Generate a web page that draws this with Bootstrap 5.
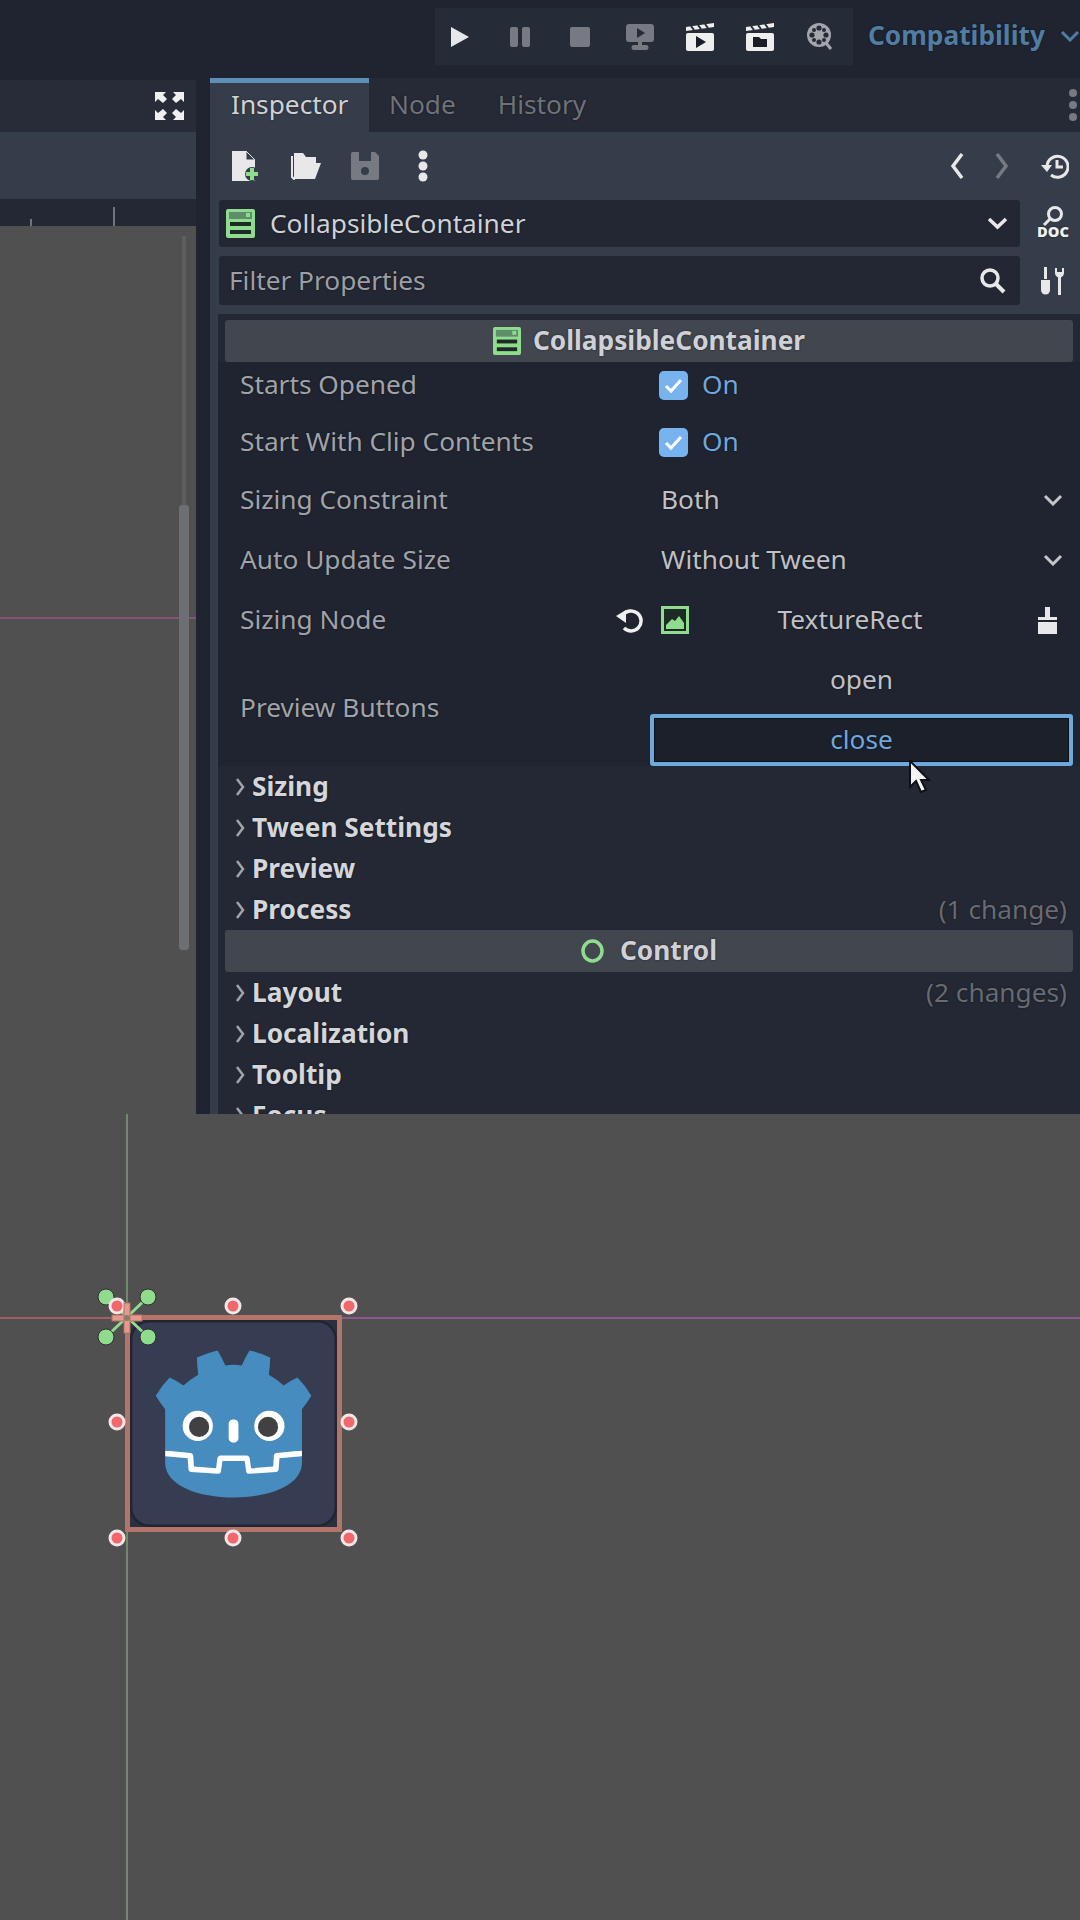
<!DOCTYPE html>
<html lang="en">
<head>
  <meta charset="UTF-8" />
  <title>Godot Inspector</title>
  <link href="https://cdn.jsdelivr.net/npm/bootstrap@5.3.0/dist/css/bootstrap.min.css" rel="stylesheet">
  <style>
    html, body { margin: 0; background: #1f2430; }
    body { font-family: "Noto Sans", sans-serif; font-size: 26.25px; line-height: 1.2; color: #d0d2d7; text-shadow: 0 0 2px rgba(0,0,0,.6); }
    svg { display: block; flex: none; }
    .app-page { width: 1080px; height: 1920px; overflow: hidden; position: relative; }

    .top-bar { height: 78px; background: #1f2430; }
    .run-group { margin-left: 435px; margin-top: 8px; width: 418px; height: 57px; background: #262b38; }
    .run-slot { width: 60px; height: 57px; }
    .run-group .run-slot:first-child { margin-left: -5px; }
    .compat { color: #527da3; font-weight: 700; margin-left: 15px; margin-top: 17px; height: 38px; }
    .compat svg { margin-left: 15px; }

    .main-row { height: 1036px; }
    .left-col { width: 196px; }
    .left-head { height: 52px; margin-top: 2px; background: #272c38; padding-right: 12px; }
    .left-tools { height: 67px; background: #363d4a; }
    .left-ruler { height: 27px; background: #232834; position: relative; }
    .tick { position: absolute; bottom: 0; width: 2px; background: #71747a; }
    .tick-a { left: 30px; height: 7px; }
    .tick-b { left: 113px; height: 19px; }
    .left-view { flex: 1; background: #505050; position: relative; overflow: hidden; }
    .left-axis { position: absolute; left: 0; right: 0; top: 391px; height: 2px; background: #85527a; }
    .left-scroll { position: absolute; left: 179px; top: 279px; width: 10px; height: 445px; background: #6d7073; border-radius: 3px; }
    .left-track { position: absolute; left: 182px; top: 10px; width: 4px; height: 269px; background: #5b5d60; }
    .gutter { width: 14px; background: #1f2430; }

    .right-col { flex: 1; min-width: 0; background: #363d4a; }
    .tab-row { height: 54px; background: #252a36; position: relative; }
    .tab-on { width: 159px; background: #363d4a; border-top: 5px solid #5e8fb8; color: #d0d2d7; padding-left: 21px; padding-top: 6px; }
    .tab-off { color: #6f727a; padding-top: 11px; }
    .tab-node { margin-left: 20px; }
    .tab-hist { margin-left: 42px; }
    .dot-col { position: absolute; right: 2px; top: 10px; }

    .tool-row { height: 68px; padding-left: 21px; padding-right: 11px; }
    .tool-a { width: 60px; }
    .tool-more { margin-left: 7px; }
    .tool-gap { margin-left: auto; }
    .nav-back { margin-right: 31px; }
    .nav-next { margin-right: 32px; }

    .field-row { height: 47px; margin-left: 9px; }
    .filter-row { height: 49px; margin-top: 9px; }
    .field-box { width: 801px; height: 100%; background: #222733; border-radius: 3px; }
    .node-box { padding-left: 7px; padding-right: 12px; }
    .node-icon { margin-right: 15px; }
    .filter-box { padding-left: 10px; padding-right: 14px; color: #9c9fa6; }
    .field-side { width: 60px; padding-left: 17px; }
    .doc-label { font-family: "Noto Sans", sans-serif; font-weight: 900; font-size: 14px; fill: #f0f0f0; }

    .prop-panel { flex: 1; min-height: 0; margin-top: 9px; margin-left: 8px; background: #232834; padding-top: 6px; overflow: hidden; }
    .sect-head { height: 42px; margin: 0 7px; background: #41464f; border-radius: 3px; font-weight: 700; color: #cfd1d6; }
    .sect-icon { margin-right: 12px; }
    .prop-row { padding-left: 22px; color: #a0a3a9; }
    .h-starts { height: 46px; margin-bottom: 6px; }
    .h-clip { height: 56px; }
    .h-std { height: 60px; }
    .prop-dark { background: #1f2430; }
    .prop-label { width: 410px; padding-right: 7px; }
    .prop-value { width: 423px; padding-left: 7px; padding-right: 7px; color: #bfc1c6; }
    .check-value { padding-left: 9px; }
    .text-value { padding-left: 11px; padding-right: 10px; }
    .on-text { color: #6fa8dc; margin-left: 14px; }
    .node-name { flex: 1; text-align: center; margin-right: 26px; }
    .h-btns { height: 116px; }
    .btn-stack { width: 423px; }
    .open-btn { height: 63px; padding-bottom: 4px; color: #bfc1c6; }
    .close-btn { height: 52px; width: 423px; border: 4px solid #6fa8dc; border-radius: 3px; background: #1c202b; color: #6fa8dc; box-shadow: inset 0 0 0 1px #0d1017; }

    .group-row { height: 41px; padding-left: 18px; padding-right: 13px; font-weight: 700; color: #d4d6da; }
    .group-row svg { margin-right: 7px; }
    .change-note { margin-left: auto; font-weight: 400; color: #686b73; }

    .mouse-arrow { position: absolute; left: 908px; top: 759px; }

    .bottom-view { flex: 1; background: #505050; position: relative; overflow: hidden; }
    .axis-green { position: absolute; left: 126px; top: 0; bottom: 0; width: 2px; background: #6f8a6a; }
    .axis-red { position: absolute; left: 0; width: 127px; top: 203px; height: 2px; background: #9c6060; }
    .axis-purple { position: absolute; left: 127px; right: 0; top: 203px; height: 2px; background: #8a5a8c; }
    .gizmo { position: absolute; left: 90px; top: 169px; }
  </style>
</head>
<body>
  <div class="app-page d-flex flex-column">

    <div class="top-bar d-flex">
      <div class="run-group d-flex align-items-center">
        <div class="run-slot d-flex align-items-center justify-content-center">
          <svg width="20" height="22" viewBox="0 0 20 22"><path d="M1 1 19 11 1 21Z" fill="#e6e7ea"/></svg>
        </div>
        <div class="run-slot d-flex align-items-center justify-content-center">
          <svg width="20" height="20" viewBox="0 0 20 20"><rect x="0" y="0" width="8" height="20" rx="2" fill="#777a82"/><rect x="12" y="0" width="8" height="20" rx="2" fill="#777a82"/></svg>
        </div>
        <div class="run-slot d-flex align-items-center justify-content-center">
          <svg width="20" height="20" viewBox="0 0 20 20"><rect width="20" height="20" rx="2" fill="#777a82"/></svg>
        </div>
        <div class="run-slot d-flex align-items-center justify-content-center">
          <svg width="28" height="26" viewBox="0 0 28 26"><path d="M3 0H25a3 3 0 0 1 3 3V15a3 3 0 0 1-3 3H16v3h4a2.500 2.500 0 0 1 0 5H8a2.500 2.500 0 0 1 0-5h4v-3H3a3 3 0 0 1-3-3V3a3 3 0 0 1 3-3Z" fill="#777a82"/><path d="M11 4 19 9 11 14Z" fill="#262b38"/></svg>
        </div>
        <div class="run-slot d-flex align-items-center justify-content-center">
          <svg width="30" height="28" viewBox="0 0 30 28"><path d="M1 4 29 0V4L1 8Z" fill="#eee"/><rect x="1" y="10" width="28" height="18" rx="2" fill="#eee"/><path d="M11 13 21 19 11 25Z" fill="#1a1d26"/><path d="M6 3 9 7M13 2 16 6M20 1 23 5" stroke="#262b38" stroke-width="2"/></svg>
        </div>
        <div class="run-slot d-flex align-items-center justify-content-center">
          <svg width="30" height="28" viewBox="0 0 30 28"><path d="M1 4 29 0V4L1 8Z" fill="#eee"/><rect x="1" y="10" width="28" height="18" rx="2" fill="#eee"/><path d="M8 14H14L16 16H22V24H8Z" fill="#1a1d26"/><path d="M6 3 9 7M13 2 16 6M20 1 23 5" stroke="#262b38" stroke-width="2"/></svg>
        </div>
        <div class="run-slot d-flex align-items-center justify-content-center">
          <svg width="27" height="29" viewBox="0 0 27 29"><circle cx="12" cy="13" r="12" fill="#a4a6ab"/><g fill="#262b38"><circle cx="12" cy="6" r="2.600"/><circle cx="12" cy="20" r="2.600"/><circle cx="5" cy="13" r="2.600"/><circle cx="19" cy="13" r="2.600"/><circle cx="7" cy="8" r="2"/><circle cx="17" cy="8" r="2"/><circle cx="7" cy="18" r="2"/><circle cx="17" cy="18" r="2"/></g><path d="M19 21 24 27" stroke="#a4a6ab" stroke-width="3" fill="none"/></svg>
        </div>
      </div>
      <div class="compat d-flex align-items-center">Compatibility
        <svg width="20" height="12" viewBox="0 0 20 12"><path d="M2 2 10 10 18 2" fill="none" stroke="#527da3" stroke-width="3"/></svg>
      </div>
    </div>

    <div class="main-row d-flex">
      <div class="left-col d-flex flex-column">
        <div class="left-head d-flex align-items-center justify-content-end">
          <svg width="29" height="28" viewBox="0 0 29 28" fill="#f0f0f0"><path d="M0 0H11L8 3 12 7 8 11 3 7 0 10Z"/><path d="M29 0H18L21 3 17 7 21 11 26 7 29 10Z"/><path d="M0 28H11L8 25 12 21 8 17 3 21 0 18Z"/><path d="M29 28H18L21 25 17 21 21 17 26 21 29 18Z"/></svg>
        </div>
        <div class="left-tools"></div>
        <div class="left-ruler"><span class="tick tick-a"></span><span class="tick tick-b"></span></div>
        <div class="left-view">
          <div class="left-axis"></div>
          <div class="left-track"></div>
          <div class="left-scroll"></div>
        </div>
      </div>
      <div class="gutter"></div>

      <div class="right-col d-flex flex-column">
        <div class="tab-row d-flex">
          <div class="tab-on">Inspector</div>
          <div class="tab-off tab-node">Node</div>
          <div class="tab-off tab-hist">History</div>
          <div class="dot-col">
            <svg width="10" height="34" viewBox="0 0 10 34" fill="#777a82"><circle cx="5" cy="5" r="4"/><circle cx="5" cy="17" r="4"/><circle cx="5" cy="29" r="4"/></svg>
          </div>
        </div>

        <div class="tool-row d-flex align-items-center">
          <div class="tool-a">
            <svg width="28" height="30" viewBox="0 0 28 30"><path d="M1 0H15L24 9V30H1Z" fill="#e8e8ea"/><path d="M15 0V9H24Z" fill="#363d4a" stroke="#e8e8ea"/><circle cx="21" cy="23" r="7" fill="#363d4a"/><path d="M19 17H23V21H27V25H23V29H19V25H15V21H19Z" fill="#8fdc8f"/></svg>
          </div>
          <div class="tool-a">
            <svg width="30" height="28" viewBox="0 0 30 28"><path d="M3 1H12L15 5H25V10H10L3 27Z" fill="#e8e8ea"/><path d="M1 4V25L3 27 9 11H25" fill="none" stroke="#e8e8ea" stroke-width="2"/><path d="M9 11H30L24 27H3Z" fill="#e8e8ea"/></svg>
          </div>
          <div class="tool-a">
            <svg width="28" height="28" viewBox="0 0 28 28"><path d="M2 0H24L28 4V26a2 2 0 0 1-2 2H2a2 2 0 0 1-2-2V2a2 2 0 0 1 2-2Z" fill="#777a82"/><rect x="8" y="0" width="12" height="9" fill="#363d4a"/><circle cx="14" cy="19" r="4" fill="#363d4a"/></svg>
          </div>
          <div class="tool-more">
            <svg width="10" height="32" viewBox="0 0 10 32" fill="#e8e8ea"><circle cx="5" cy="5" r="4.500"/><circle cx="5" cy="16" r="4.500"/><circle cx="5" cy="27" r="4.500"/></svg>
          </div>
          <div class="tool-gap nav-back">
            <svg width="14" height="28" viewBox="0 0 14 28"><path d="M12 2 3 14 12 26" fill="none" stroke="#e8e8ea" stroke-width="3.500"/></svg>
          </div>
          <div class="nav-next">
            <svg width="14" height="28" viewBox="0 0 14 28"><path d="M2 2 11 14 2 26" fill="none" stroke="#777a82" stroke-width="3.500"/></svg>
          </div>
          <div>
            <svg width="28" height="26" viewBox="0 0 28 26"><path d="M6 13a10.500 10.500 0 1 1 4 9" fill="none" stroke="#e8e8ea" stroke-width="3"/><path d="M0 12H11L6 19Z" fill="#e8e8ea"/><path d="M16 7V14H22" fill="none" stroke="#e8e8ea" stroke-width="3"/></svg>
          </div>
        </div>

        <div class="field-row d-flex">
          <div class="field-box node-box d-flex align-items-center">
            <svg class="node-icon" width="29" height="29" viewBox="0 0 29 29"><rect width="29" height="29" rx="2" fill="#8fdc8f"/><rect x="3" y="3" width="23" height="7" fill="#5f8f6a"/><rect x="20" y="4" width="4" height="4" fill="#8fdc8f"/><rect x="4" y="13" width="21" height="4" fill="#1e2a24"/><rect x="4" y="21" width="21" height="4" fill="#1e2a24"/></svg>
            <span>CollapsibleContainer</span>
            <svg class="ms-auto" width="21" height="13" viewBox="0 0 21 13"><path d="M2 2 10.500 10 19 2" fill="none" stroke="#e8e8ea" stroke-width="3.500"/></svg>
          </div>
          <div class="field-side d-flex align-items-center">
            <svg width="32" height="36" viewBox="0 0 32 36"><circle cx="18" cy="8" r="6.500" fill="none" stroke="#e8e8ea" stroke-width="3"/><path d="M13 13 7 19" stroke="#e8e8ea" stroke-width="3"/><text class="doc-label" x="0" y="31" textLength="32" lengthAdjust="spacingAndGlyphs">DOC</text></svg>
          </div>
        </div>

        <div class="field-row filter-row d-flex">
          <div class="field-box filter-box d-flex align-items-center">
            <span>Filter Properties</span>
            <svg class="ms-auto" width="26" height="26" viewBox="0 0 26 26"><circle cx="10" cy="10" r="8" fill="none" stroke="#e8e8ea" stroke-width="3.500"/><path d="M16 16 24 24" stroke="#e8e8ea" stroke-width="4"/></svg>
          </div>
          <div class="field-side d-flex align-items-center ps-3">
            <svg class="ms-1" width="26" height="28" viewBox="0 0 26 28"><rect x="4" y="0" width="3" height="12" fill="#e8e8ea"/><path d="M1 13H10V23a4.500 4.500 0 0 1-9 0Z" fill="#e8e8ea"/><path d="M15 1V6a4.500 4.500 0 0 0 9 0V1h-2V5H17V1Z" fill="#e8e8ea"/><rect x="18" y="9" width="3" height="19" fill="#e8e8ea"/></svg>
          </div>
        </div>

        <div class="prop-panel">
          <div class="sect-head d-flex align-items-center justify-content-center">
            <svg class="sect-icon" width="28" height="28" viewBox="0 0 29 29"><rect width="29" height="29" rx="2" fill="#8fdc8f"/><rect x="3" y="3" width="23" height="7" fill="#5f8f6a"/><rect x="20" y="4" width="4" height="4" fill="#8fdc8f"/><rect x="4" y="13" width="21" height="4" fill="#1e2a24"/><rect x="4" y="21" width="21" height="4" fill="#1e2a24"/></svg>
            <span>CollapsibleContainer</span>
          </div>

          <div class="prop-dark">
            <div class="prop-row h-starts d-flex align-items-center">
              <div class="prop-label">Starts Opened</div>
              <div class="prop-value check-value d-flex align-items-center">
                <svg width="29" height="29" viewBox="0 0 29 29"><rect width="29" height="29" rx="5" fill="#77b3ee"/><path d="M7 15 12 20 22 9" fill="none" stroke="#fff" stroke-width="3"/></svg>
                <span class="on-text">On</span>
              </div>
            </div>
            <div class="prop-row h-clip d-flex align-items-center">
              <div class="prop-label">Start With Clip Contents</div>
              <div class="prop-value check-value d-flex align-items-center">
                <svg width="29" height="29" viewBox="0 0 29 29"><rect width="29" height="29" rx="5" fill="#77b3ee"/><path d="M7 15 12 20 22 9" fill="none" stroke="#fff" stroke-width="3"/></svg>
                <span class="on-text">On</span>
              </div>
            </div>
            <div class="prop-row h-std d-flex align-items-center">
              <div class="prop-label">Sizing Constraint</div>
              <div class="prop-value text-value d-flex align-items-center">
                <span>Both</span>
                <svg class="ms-auto" width="20" height="12" viewBox="0 0 20 12"><path d="M2 2 10 10 18 2" fill="none" stroke="#c4c6ca" stroke-width="3"/></svg>
              </div>
            </div>
            <div class="prop-row h-std d-flex align-items-center">
              <div class="prop-label">Auto Update Size</div>
              <div class="prop-value text-value d-flex align-items-center">
                <span>Without Tween</span>
                <svg class="ms-auto" width="20" height="12" viewBox="0 0 20 12"><path d="M2 2 10 10 18 2" fill="none" stroke="#c4c6ca" stroke-width="3"/></svg>
              </div>
            </div>
            <div class="prop-row h-std d-flex align-items-center">
              <div class="prop-label d-flex align-items-center justify-content-between">
                <span>Sizing Node</span>
                <svg width="27" height="26" viewBox="0 0 27 26"><path d="M7 8a10 10 0 1 1 1 13" fill="none" stroke="#f0f0f0" stroke-width="3.500"/><path d="M0 9 10 3V16Z" fill="#f0f0f0"/></svg>
              </div>
              <div class="prop-value d-flex align-items-center">
                <svg class="ms-1" width="28" height="28" viewBox="0 0 28 28"><rect width="28" height="28" fill="#8fdc8f"/><rect x="3" y="3" width="22" height="22" fill="#1e2a24"/><path d="M5 23V19L11 13 14 15 18 10 23 17V23Z" fill="#8fdc8f"/></svg>
                <span class="node-name">TextureRect</span>
                <svg class="me-2" width="21" height="27" viewBox="0 0 21 27"><path d="M8 0H13V10H20V13H1V10H8Z" fill="#e8e8ea"/><path d="M1 15H20V27H1Z" fill="#e8e8ea"/></svg>
              </div>
            </div>
            <div class="prop-row h-btns d-flex align-items-center">
              <div class="prop-label">Preview Buttons</div>
              <div class="btn-stack d-flex flex-column">
                <div class="open-btn d-flex align-items-center justify-content-center">open</div>
                <div class="close-btn d-flex align-items-center justify-content-center">close</div>
              </div>
            </div>
          </div>

          <div class="group-row d-flex align-items-center"><svg width="9" height="18" viewBox="0 0 9 18"><path d="M1 1 7 9 1 17" fill="none" stroke="#a0a3a9" stroke-width="2.500"/></svg>Sizing</div>
          <div class="group-row d-flex align-items-center"><svg width="9" height="18" viewBox="0 0 9 18"><path d="M1 1 7 9 1 17" fill="none" stroke="#a0a3a9" stroke-width="2.500"/></svg>Tween Settings</div>
          <div class="group-row d-flex align-items-center"><svg width="9" height="18" viewBox="0 0 9 18"><path d="M1 1 7 9 1 17" fill="none" stroke="#a0a3a9" stroke-width="2.500"/></svg>Preview</div>
          <div class="group-row d-flex align-items-center"><svg width="9" height="18" viewBox="0 0 9 18"><path d="M1 1 7 9 1 17" fill="none" stroke="#a0a3a9" stroke-width="2.500"/></svg>Process<span class="change-note">(1 change)</span></div>

          <div class="sect-head d-flex align-items-center justify-content-center">
            <svg class="me-3" width="23" height="24" viewBox="0 0 23 24"><ellipse cx="11.500" cy="12" rx="9.500" ry="10" fill="none" stroke="#8fdc8f" stroke-width="3.500"/></svg>
            <span>Control</span>
          </div>

          <div class="group-row d-flex align-items-center"><svg width="9" height="18" viewBox="0 0 9 18"><path d="M1 1 7 9 1 17" fill="none" stroke="#a0a3a9" stroke-width="2.500"/></svg>Layout<span class="change-note">(2 changes)</span></div>
          <div class="group-row d-flex align-items-center"><svg width="9" height="18" viewBox="0 0 9 18"><path d="M1 1 7 9 1 17" fill="none" stroke="#a0a3a9" stroke-width="2.500"/></svg>Localization</div>
          <div class="group-row d-flex align-items-center"><svg width="9" height="18" viewBox="0 0 9 18"><path d="M1 1 7 9 1 17" fill="none" stroke="#a0a3a9" stroke-width="2.500"/></svg>Tooltip</div>
          <div class="group-row d-flex align-items-center"><svg width="9" height="18" viewBox="0 0 9 18"><path d="M1 1 7 9 1 17" fill="none" stroke="#a0a3a9" stroke-width="2.500"/></svg>Focus</div>
        </div>
      </div>
    </div>

    <div class="bottom-view">
      <div class="axis-green"></div>
      <div class="axis-red"></div>
      <div class="axis-purple"></div>
      <svg class="gizmo" width="270" height="270" viewBox="90 1283 270 270">
        <rect x="128" y="1318" width="211" height="211" fill="#2b3040"/>
        <svg x="127" y="1317" width="213" height="213" viewBox="0 0 128 128">
          <rect x="2.500" y="2.500" width="123" height="123" rx="11" fill="#363d52" stroke="#212532" stroke-width="1.500"/>
          <g transform="scale(.101) translate(122 122)"><g fill="#fff"><path d="M105 673v33q407 354 814 0v-33z"/><path d="m105 673 152 14q12 1 15 14l4 67 132 10 8-61q2-11 15-15h162q13 4 15 15l8 61 132-10 4-67q3-13 15-14l152-14V427q30-39 56-81-35-59-83-108-43 20-82 47-40-37-88-64 7-51 8-102-59-28-123-42-26 43-46 89-49-7-98 0-20-46-46-89-64 14-123 42 1 51 8 102-48 27-88 64-39-27-82-47-48 49-83 108 26 42 56 81zm0 33v39c0 276 813 276 814 0v-39l-134 12-5 69q-2 10-14 13l-162 11q-12 0-16-11l-10-65H446l-10 65q-4 11-16 11l-162-11q-12-3-14-13l-5-69z" fill="#478cbf"/><path d="M483 600c0 34 58 34 58 0v-86c0-34-58-34-58 0z"/><circle cx="725" cy="526" r="90"/><circle cx="299" cy="526" r="90"/></g><g fill="#414042"><circle cx="307" cy="532" r="60"/><circle cx="717" cy="532" r="60"/></g></g>
        </svg>
        <rect x="127.500" y="1317.500" width="212" height="212" fill="none" stroke="#b3756a" stroke-width="5"/>
        <g stroke="#8fdc8f" stroke-width="3"><path d="M106 1297 148 1337M148 1297 106 1337"/></g>
        <g fill="#8fdc8f" stroke="#2c2f2c" stroke-width="1"><circle cx="106" cy="1297" r="8"/><circle cx="148" cy="1297" r="8"/><circle cx="106" cy="1337" r="8"/><circle cx="148" cy="1337" r="8"/></g>
        <g fill="#f0686c" stroke="#f3e6e6" stroke-width="3">
          <circle cx="117" cy="1306" r="7"/><circle cx="233" cy="1306" r="7"/><circle cx="349" cy="1306" r="7"/>
          <circle cx="117" cy="1422" r="7"/><circle cx="349" cy="1422" r="7"/>
          <circle cx="117" cy="1538" r="7"/><circle cx="233" cy="1538" r="7"/><circle cx="349" cy="1538" r="7"/>
        </g>
        <g fill="#e59a90" stroke="#b5705f" stroke-width="1"><rect x="112" y="1315" width="30" height="6"/><rect x="124" y="1303" width="6" height="30"/></g>
        <circle cx="127" cy="1318" r="3" fill="#8a7a70"/>
      </svg>
    </div>

    <svg class="mouse-arrow" width="24" height="36" viewBox="0 0 24 36"><path d="M2 2V28L8 22 13 33 18 31 13 21H21Z" fill="#f4f4f4" stroke="#0d1017" stroke-width="2"/></svg>
  </div>
</body>
</html>
